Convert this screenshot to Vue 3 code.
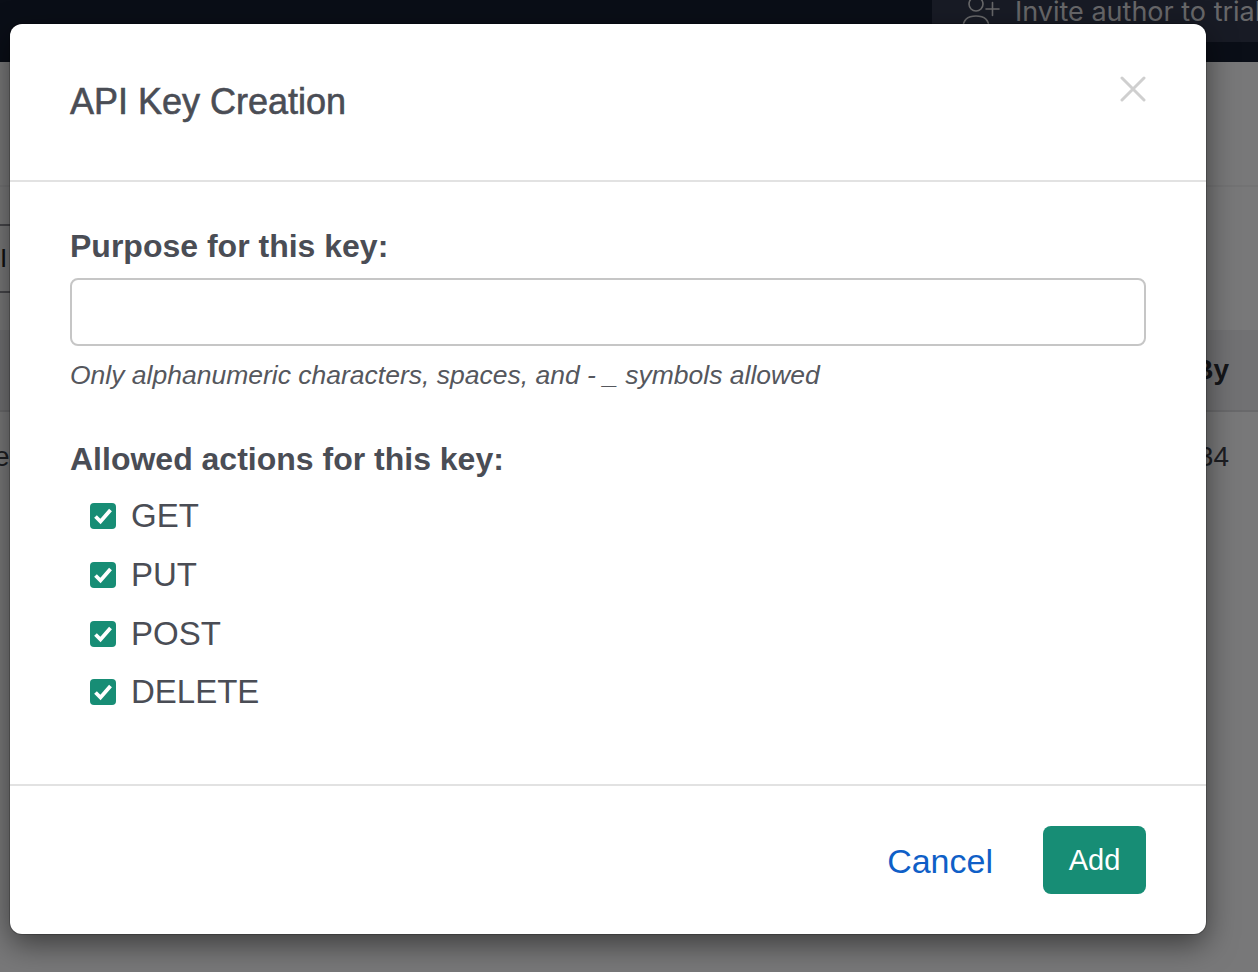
<script setup>
const actions = ['GET', 'PUT', 'POST', 'DELETE']
</script>

<template>
  <div class="page">
    <header class="nav">
      <div class="invite">
        <svg class="invite-icon" viewBox="0 0 38 36" fill="none" stroke="currentColor" stroke-width="1.6" stroke-linecap="round">
          <circle cx="14" cy="4" r="7" />
          <path d="M1 28 C1 19 7 16 14 16 C21 16 27 19 27 28" />
          <path d="M24 9 H37 M30.500 2.500 V15.500" />
        </svg>
        <span>Invite author to trial</span>
      </div>
    </header>
    <section class="strip"></section>
    <div class="search"><span>I</span></div>
    <div class="table-head"><span>Created By</span></div>
    <div class="table-row"><span class="hash">e2</span><span>1234</span></div>

    <div class="backdrop"></div>

    <div class="modal">
      <div class="modal-head">
        <h2>API Key Creation</h2>
        <svg class="close" viewBox="0 0 26 26" fill="none" stroke="#cfcfcf" stroke-width="3" stroke-linecap="round">
          <path d="M2 2 L24 24 M24 2 L2 24" />
        </svg>
      </div>
      <div class="modal-body">
        <label class="field-label">Purpose for this key:</label>
        <input class="text-input" type="text" />
        <p class="help">Only alphanumeric characters, spaces, and - _ symbols allowed</p>
        <div class="field-label second">Allowed actions for this key:</div>
        <ul class="checks">
          <li v-for="a in actions" :key="a">
            <span class="box">
              <svg viewBox="0 0 26 26" fill="none" stroke="#fff" stroke-width="3.800" stroke-linecap="butt" stroke-linejoin="miter">
                <path d="M5.500 13.500 L10.500 18.500 L20.500 7" />
              </svg>
            </span>
            <span>{{ a }}</span>
          </li>
        </ul>
      </div>
      <div class="modal-foot">
        <a class="cancel">Cancel</a>
        <button class="add" type="button">Add</button>
      </div>
    </div>
  </div>
</template>

<style>
html, body { margin: 0; background: #fff; }
</style>

<style scoped>
.page {
  position: relative;
  width: 1258px;
  height: 972px;
  overflow: hidden;
  background: #f1f1f3;
  font-family: "Liberation Sans", Arial, sans-serif;
  color: #4a4d55;
}
.nav {
  height: 62px;
  background: #141c2e;
  display: flex;
  justify-content: flex-end;
  align-items: flex-start;
}
.invite {
  width: 326px;
  height: 42px;
  box-sizing: border-box;
  background: #30364a;
  color: #cfcfd2;
  display: flex;
  align-items: flex-start;
  padding-left: 30px;
  font-family: Inter, "Liberation Sans", sans-serif;
  font-size: 27px;
  white-space: nowrap;
  overflow: hidden;
}
.invite-icon { width: 38px; height: 36px; flex: none; margin-top: 0; }
.invite span { margin-left: 15px; line-height: 26px; margin-top: -1px; }
.strip { height: 123px; border-bottom: 2px solid #e6e6e8; }
.search {
  margin: 37px 0 0 -40px;
  width: 400px;
  height: 65px;
  border: 2px solid #8c8c94;
  border-radius: 6px;
  display: flex;
  align-items: center;
  padding-left: 38px;
  font-size: 26px;
  color: #222;
}
.table-head {
  margin-top: 37px;
  height: 80px;
  background: #e3e3e6;
  border-bottom: 2px solid #d3d3d6;
  display: flex;
  justify-content: flex-end;
  align-items: center;
  padding-right: 29px;
  font-size: 28px;
  font-weight: bold;
  color: #2a2c33;
}
.table-row {
  height: 90px;
  display: flex;
  justify-content: space-between;
  align-items: center;
  padding-right: 29px;
  font-size: 28px;
  color: #3a3c44;
}
.hash { margin-left: -6px; }
.backdrop {
  position: absolute;
  inset: 0;
  background: rgba(0, 0, 0, 0.5);
}
.modal {
  position: absolute;
  left: 10px;
  top: 24px;
  width: 1196px;
  height: 910px;
  background: #fff;
  border-radius: 12px;
  box-shadow: 0 0 0 1px rgba(0, 0, 0, 0.2), 0 10px 30px rgba(0, 0, 0, 0.5);
  display: flex;
  flex-direction: column;
}
.modal-head {
  height: 156px;
  flex: none;
  box-sizing: content-box;
  border-bottom: 2px solid #e2e2e2;
  padding: 0 60px;
  display: flex;
  justify-content: space-between;
  align-items: flex-start;
}
.modal-head h2 {
  margin: 57px 0 0;
  font-size: 36px;
  line-height: 42px;
  font-weight: normal;
  -webkit-text-stroke: 0.6px #4a4d55;
}
.close { width: 26px; height: 26px; margin-top: 52px; }
.modal-body {
  flex: 1;
  padding: 44px 60px 0;
}
.field-label {
  display: block;
  font-size: 32px;
  line-height: 40px;
  font-weight: bold;
}
.text-input {
  display: block;
  box-sizing: border-box;
  width: 100%;
  height: 68px;
  margin-top: 12px;
  border: 2px solid #c6c6c6;
  border-radius: 8px;
  background: #fff;
  outline: none;
}
.help {
  margin: 14px 0 0;
  font-size: 26.500px;
  line-height: 30px;
  font-style: italic;
  color: #55575d;
}
.second { margin-top: 49px; }
.checks {
  list-style: none;
  margin: 8px 0 0;
  padding: 0 0 0 20px;
}
.checks li {
  height: 58.700px;
  display: flex;
  align-items: center;
  gap: 15px;
  font-size: 33px;
}
.box {
  width: 26px;
  height: 26px;
  border-radius: 4px;
  background: #178d75;
  flex: none;
}
.box svg { display: block; width: 26px; height: 26px; }
.modal-foot {
  flex: none;
  height: 148px;
  border-top: 2px solid #e2e2e2;
  padding: 0 60px;
  display: flex;
  justify-content: flex-end;
  align-items: center;
  gap: 50px;
}
.cancel { color: #0f5fc7; font-size: 34px; margin-top: 2px; }
.add {
  width: 103px;
  height: 68px;
  border: none;
  border-radius: 8px;
  background: #178d75;
  color: #fff;
  font-family: inherit;
  font-size: 29px;
}
</style>
